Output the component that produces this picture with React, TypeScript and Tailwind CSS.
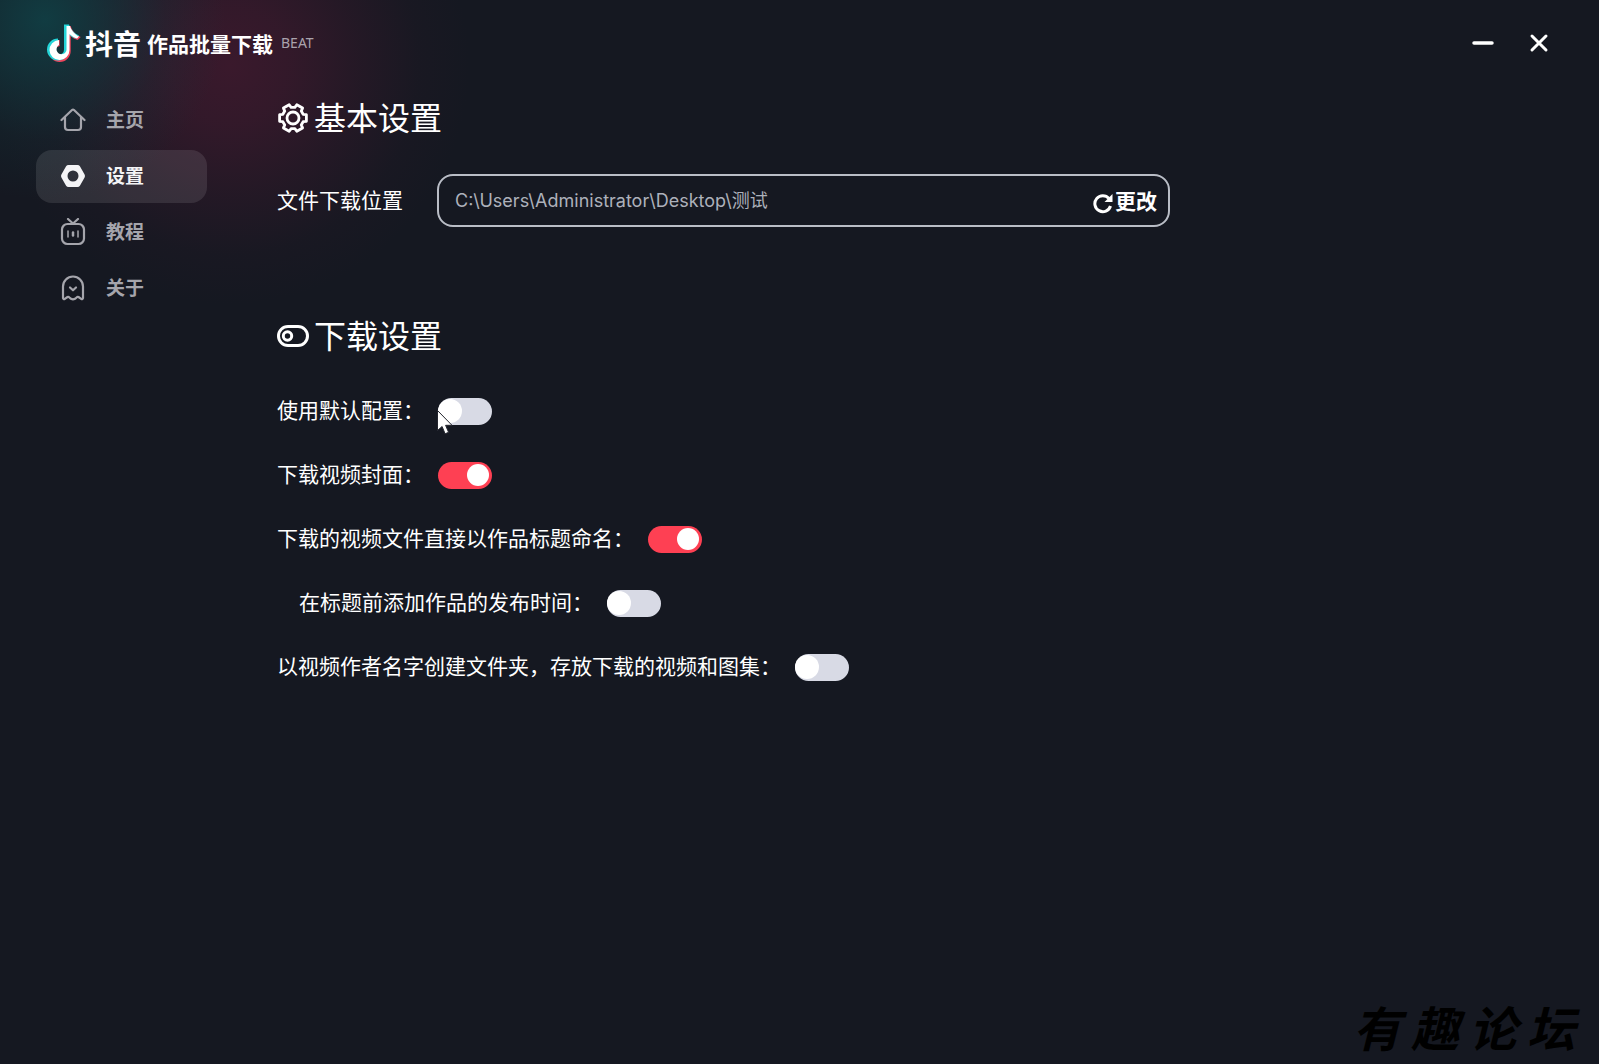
import { useState } from 'react'
import type { ReactNode } from 'react'

interface NavItem {
  key: string
  label: string
  icon: ReactNode
}

interface SwitchItem {
  key: string
  label: string
  on: boolean
  nested?: boolean
}

const NOTE = 'M17 1h5c1 4 5 9 10 11l-3 3c-3-1-5-2-7-4v15a11 11 0 1 1-11-11v6a5 5 0 1 0 6 5z'

// six-tooth outline, centred on 16,16
const GEAR = [0, 60, 120, 180, 240, 300]
  .flatMap((a) => [[13.8, a - 14], [13.8, a + 14], [10.8, a + 20], [10.8, a + 40]])
  .map(([r, a]) => {
    const t = (a * Math.PI) / 180
    return `${(16 + r * Math.cos(t)).toFixed(2)},${(16 + r * Math.sin(t)).toFixed(2)}`
  })
  .join(' ')

function LogoMark() {
  return (
    <svg width="34" height="40" viewBox="-1 -1 34 40" aria-hidden="true">
      <path d={NOTE} fill="#f0445c" transform="translate(.7 1)" />
      <path d={NOTE} fill="#25d5d8" transform="translate(-1 -.5)" />
      <path d="M18.500 2h3.500c1 4 4.500 8.500 9 10.500l-2 2c-3-1-5-2-7.500-4.500v16a10 10 0 1 1-10.500-10v5a5 5 0 1 0 7.500 5z" fill="#fff" />
    </svg>
  )
}

const line = {
  width: 26,
  height: 28,
  viewBox: '0 0 26 28',
  fill: 'none',
  stroke: 'currentColor',
  strokeWidth: 2.2,
  strokeLinecap: 'round',
  strokeLinejoin: 'round',
  'aria-hidden': true,
} as const

const NAV: NavItem[] = [
  {
    key: 'home',
    label: '主页',
    icon: (
      <svg {...line}>
        <path d="M1.500 14 12 4q1-.9 2 0l10.500 10M5 11.500v9.500a3 3 0 0 0 3 3h10a3 3 0 0 0 3-3v-9.500" />
      </svg>
    ),
  },
  {
    key: 'settings',
    label: '设置',
    icon: (
      <svg {...line} stroke="none" fill="currentColor">
        <path
          fillRule="evenodd"
          d="M8.500 3h9q1.600 0 2.400 1.300l4.700 8.200q.8 1.500 0 3l-4.700 8.200Q19.100 25 17.500 25h-9q-1.600 0-2.400-1.300l-4.700-8.200q-.8-1.500 0-3l4.700-8.200Q6.900 3 8.500 3zM13 8.500a5.500 5.500 0 1 0 0 11 5.500 5.500 0 0 0 0-11z"
        />
      </svg>
    ),
  },
  {
    key: 'guide',
    label: '教程',
    icon: (
      <svg {...line}>
        <rect x="2" y="6" width="22" height="20" rx="5.500" />
        <path d="m8 1 5 4.500L18 1" />
        <path d="M8 13v6M18 13v6" strokeWidth="1.500" />
        <path d="M13 14.500v3" strokeWidth="2.500" />
      </svg>
    ),
  },
  {
    key: 'about',
    label: '关于',
    icon: (
      <svg {...line}>
        <path d="M3 24V12.500a10 10 0 0 1 20 0V24q-.3 1.500-1.800.9L18.500 23q-.7-.4-1.300 0L15 24.800q-2 1-4 0L8.800 23q-.6-.4-1.300 0l-2.700 1.900Q3.300 25.500 3 24z" />
        <path d="m10 13.500 3 2.800 3-2.800" />
      </svg>
    ),
  },
]

const SWITCHES: SwitchItem[] = [
  { key: 'defaults', label: '使用默认配置：', on: false },
  { key: 'cover', label: '下载视频封面：', on: true },
  { key: 'title', label: '下载的视频文件直接以作品标题命名：', on: true },
  { key: 'time', label: '在标题前添加作品的发布时间：', on: false, nested: true },
  { key: 'folder', label: '以视频作者名字创建文件夹，存放下载的视频和图集：', on: false },
]

function Header() {
  return (
    <header className="flex h-[86px] items-center justify-between pr-11 pl-[47px]">
      <h1 className="flex items-center">
        <LogoMark />
        <span className="ml-1 text-[28px] leading-8 font-bold">抖音</span>
        <span className="ml-1.5 text-[21px] leading-8 font-bold">作品批量下载</span>
        <span className="ml-2 font-['Noto_Sans'] text-sm text-[#aaa3ac]">BEAT</span>
      </h1>
      <div className="flex gap-6">
        <button aria-label="最小化" className="grid size-8 place-items-center">
          <svg width="22" height="22" viewBox="0 0 22 22" stroke="currentColor" strokeWidth="3.500" strokeLinecap="round">
            <path d="M2 11h18" />
          </svg>
        </button>
        <button aria-label="关闭" className="grid size-8 place-items-center">
          <svg width="20" height="20" viewBox="0 0 20 20" stroke="currentColor" strokeWidth="3" strokeLinecap="round">
            <path d="m3 3 14 14M17 3 3 17" />
          </svg>
        </button>
      </div>
    </header>
  )
}

function Sidebar({ active, onSelect }: { active: string; onSelect: (key: string) => void }) {
  return (
    <nav className="ml-9 flex w-[171px] shrink-0 flex-col gap-[3px] pt-2">
      {NAV.map((item) => (
        <button
          key={item.key}
          onClick={() => onSelect(item.key)}
          className={`flex h-[53px] items-center gap-5 rounded-2xl pb-0.5 pl-6 text-[19px] font-bold ${
            item.key === active ? 'bg-white/10 text-[#f4f4f6]' : 'text-[#a5a5ac]'
          }`}
        >
          {item.icon}
          {item.label}
        </button>
      ))}
    </nav>
  )
}

function Pointer() {
  return (
    <svg width="18" height="27" viewBox="0 0 18 27" className="pointer-events-none absolute top-3 -left-px" aria-hidden="true">
      <path d="M.5.500v20l4.600-4 3 7.300 3.500-1.500-3-7h6.400z" fill="#fff" stroke="#23252e" />
    </svg>
  )
}

function SwitchRow({ item }: { item: SwitchItem }) {
  const [on, setOn] = useState(item.on)
  return (
    <div className={`flex h-16 items-center gap-[14px] ${item.nested ? 'pl-[22px]' : ''}`}>
      <label htmlFor={item.key} className="pb-1 text-[21px] leading-8">{item.label}</label>
      <span className="relative">
        <input
          id={item.key}
          type="checkbox"
          role="switch"
          checked={on}
          onChange={(e) => setOn(e.target.checked)}
          className="flex h-[27px] w-[54px] appearance-none items-center rounded-full bg-[#d8dae5] before:size-6 before:rounded-full before:bg-white checked:justify-end checked:bg-[#fe4053] checked:pr-[3px] checked:before:size-[22px]"
        />
        {item.key === 'defaults' && <Pointer />}
      </span>
    </div>
  )
}

export default function App() {
  const [active, setActive] = useState('settings')
  const [path, setPath] = useState('C:\\Users\\Administrator\\Desktop\\测试')

  return (
    <div className="relative min-h-screen overflow-hidden bg-[#151821] bg-[radial-gradient(circle_at_45px_20px,#113c42_0,#113c4299_60px,#113c4233_120px,transparent_180px),radial-gradient(circle_at_230px_65px,#3a192c_0,#3a192ccc_60px,#3a192c66_130px,#3a192c1a_190px,transparent_240px)] font-['Noto_Sans_CJK_SC',sans-serif] text-white">
      <Header />
      <div className="flex">
        <Sidebar active={active} onSelect={setActive} />
        <main className="ml-[70px] min-w-0 flex-1 pr-10">
          <section>
            <h2 className="flex h-16 items-center gap-[5px] text-[32px] leading-10">
              <svg width="32" height="32" viewBox="0 0 32 32" fill="none" stroke="currentColor" strokeWidth="2.800" strokeLinejoin="round" aria-hidden="true">
                <polygon points={GEAR} />
                <circle cx="16" cy="16" r="6" />
              </svg>
              <span className="pb-1">基本设置</span>
            </h2>
            <div className="mt-6 flex items-center gap-[34px]">
              <label htmlFor="path" className="shrink-0 pb-1 text-[21px] leading-8">文件下载位置</label>
              <div className="flex h-[53px] max-w-[733px] flex-1 items-center rounded-2xl border-2 border-[#b9bdc6] pr-[11px] pl-4">
                <input
                  id="path"
                  value={path}
                  onChange={(e) => setPath(e.target.value)}
                  className="min-w-0 flex-1 bg-transparent font-['Inter','Noto_Sans_CJK_SC',sans-serif] text-lg text-[#adb1bb] outline-none"
                />
                <button className="flex items-center gap-px text-[21px] leading-8 font-bold">
                  <svg width="22" height="22" viewBox="0 0 22 22" className="mt-1" aria-hidden="true">
                    <path d="M17 6.500A8 8 0 1 0 18.500 14" fill="none" stroke="currentColor" strokeWidth="3" />
                    <path d="M20.500 2v8h-8z" fill="currentColor" />
                  </svg>
                  <span className="pb-0.5">更改</span>
                </button>
              </div>
            </div>
          </section>
          <section className="mt-[77px]">
            <h2 className="flex h-16 items-center gap-[5px] text-[32px] leading-10">
              <svg width="32" height="32" viewBox="0 0 32 32" fill="none" stroke="currentColor" strokeWidth="3" aria-hidden="true">
                <rect x="1.500" y="6.500" width="29" height="19" rx="9.500" />
                <circle cx="10.500" cy="16" r="4.200" />
              </svg>
              <span className="pb-1">下载设置</span>
            </h2>
            <div className="mt-[11px]">
              {SWITCHES.map((item) => (
                <SwitchRow key={item.key} item={item} />
              ))}
            </div>
          </section>
        </main>
      </div>
      {/* forum mark in the corner */}
      <div className="pointer-events-none absolute right-6 bottom-2 flex gap-[10px] text-5xl leading-[60px] font-bold text-black italic">
        <span>有</span>
        <span>趣</span>
        <span>论</span>
        <span>坛</span>
      </div>
    </div>
  )
}
